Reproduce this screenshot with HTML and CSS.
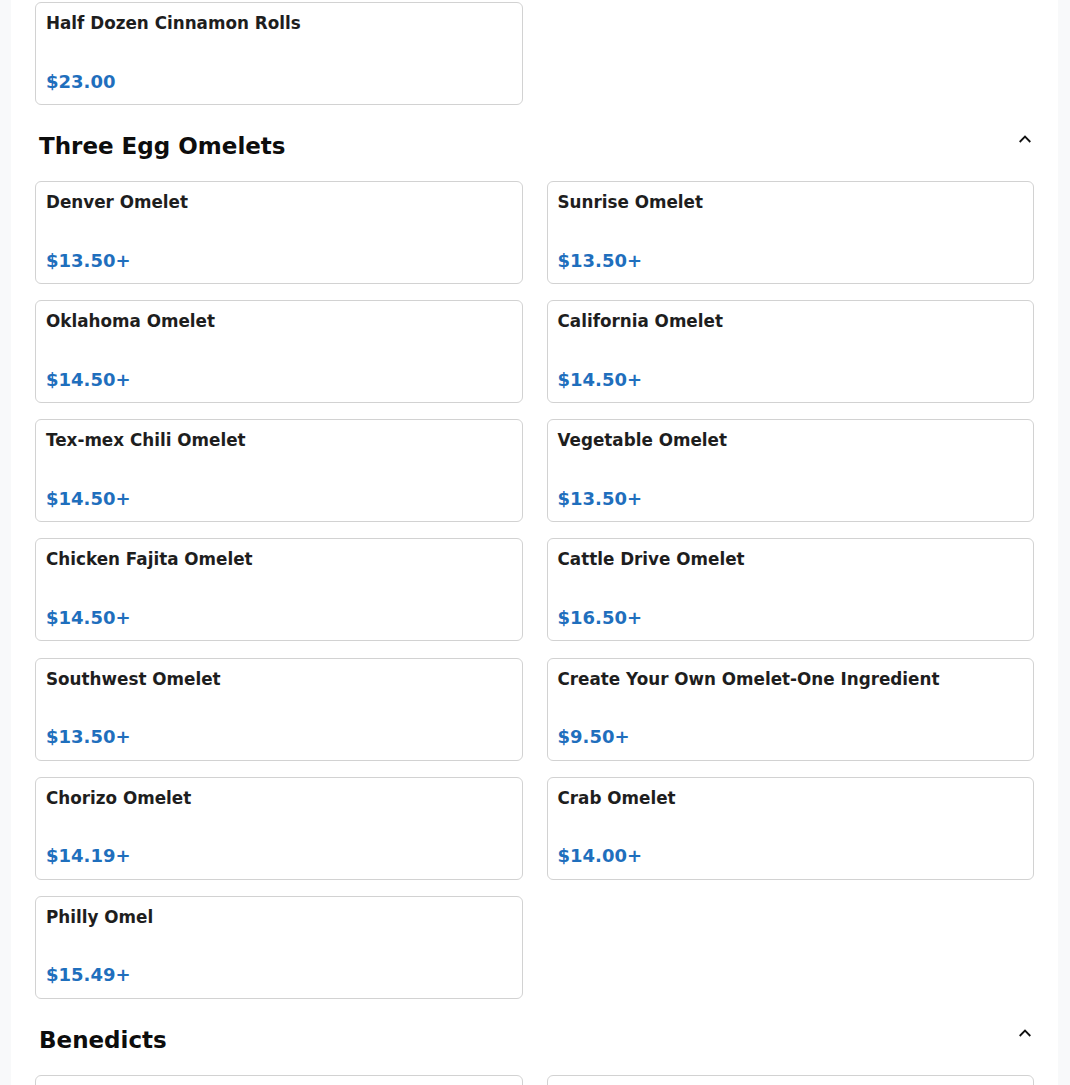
FILE: index.html
```html
<!DOCTYPE html>
<html lang="en">
<head>
<meta charset="utf-8">
<title>Menu</title>
<link rel="stylesheet" href="styles.css">
</head>
<body>
<main class="menu">
  <div class="grid">
    <div class="card"><div class="name">Half Dozen Cinnamon Rolls</div><div class="price">$23.00</div></div>
  </div>

  <section class="section">
    <header class="section-head">
      <h2>Three Egg Omelets</h2>
      <svg class="chev" width="12" height="8" viewBox="0 0 12 8"><polyline points="0.7,7 6,1.6 11.3,7" fill="none" stroke="#111" stroke-width="1.8"/></svg>
    </header>
    <div class="grid">
      <div class="card"><div class="name">Denver Omelet</div><div class="price">$13.50+</div></div>
      <div class="card"><div class="name">Sunrise Omelet</div><div class="price">$13.50+</div></div>
      <div class="card"><div class="name">Oklahoma Omelet</div><div class="price">$14.50+</div></div>
      <div class="card"><div class="name">California Omelet</div><div class="price">$14.50+</div></div>
      <div class="card"><div class="name">Tex-mex Chili Omelet</div><div class="price">$14.50+</div></div>
      <div class="card"><div class="name">Vegetable Omelet</div><div class="price">$13.50+</div></div>
      <div class="card"><div class="name">Chicken Fajita Omelet</div><div class="price">$14.50+</div></div>
      <div class="card"><div class="name">Cattle Drive Omelet</div><div class="price">$16.50+</div></div>
      <div class="card"><div class="name">Southwest Omelet</div><div class="price">$13.50+</div></div>
      <div class="card"><div class="name">Create Your Own Omelet-One Ingredient</div><div class="price">$9.50+</div></div>
      <div class="card"><div class="name">Chorizo Omelet</div><div class="price">$14.19+</div></div>
      <div class="card"><div class="name">Crab Omelet</div><div class="price">$14.00+</div></div>
      <div class="card"><div class="name">Philly Omel</div><div class="price">$15.49+</div></div>
    </div>
  </section>

  <section class="section">
    <header class="section-head">
      <h2>Benedicts</h2>
      <svg class="chev" width="12" height="8" viewBox="0 0 12 8"><polyline points="0.7,7 6,1.6 11.3,7" fill="none" stroke="#111" stroke-width="1.8"/></svg>
    </header>
    <div class="grid">
      <div class="card"><div class="name">&nbsp;</div><div class="price">&nbsp;</div></div>
      <div class="card"><div class="name">&nbsp;</div><div class="price">&nbsp;</div></div>
    </div>
  </section>
</main>
</body>
</html>
```

FILE: styles.css
```css
html, body {
  margin: 0;
  padding: 0;
}
body {
  background: #f8f9fa;
  font-family: "DejaVu Sans", "Liberation Sans", sans-serif;
  color: #212529;
}
.menu {
  background: #ffffff;
  margin: 0 12px 0 11px;
  padding: 2px 24px 24px;
}
.grid {
  display: grid;
  grid-template-columns: 1fr 1fr;
  column-gap: 24px;
  row-gap: 16.15px;
}
.card {
  border: 1px solid #d2d2d2;
  border-radius: 6px;
  padding: 10px 10px 12.5px;
  display: flex;
  flex-direction: column;
  height: 103px;
  box-sizing: border-box;
}
.name {
  font-size: 16.8px;
  font-weight: bold;
  line-height: 20px;
  color: #1e1e1e;
}
.price {
  margin-top: auto;
  font-size: 18px;
  font-weight: bold;
  line-height: 21px;
  color: #1f6fbd;
}
.section-head {
  display: flex;
  justify-content: space-between;
  align-items: flex-start;
  padding: 0 3px 0 4px;
  margin: 28px 0 21px;
}
.section-head h2 {
  margin: 0;
  font-size: 23px;
  line-height: 27px;
  font-weight: bold;
  color: #0d0d0d;
}
.chev {
  display: block;
  margin-top: 2px;
}
```
